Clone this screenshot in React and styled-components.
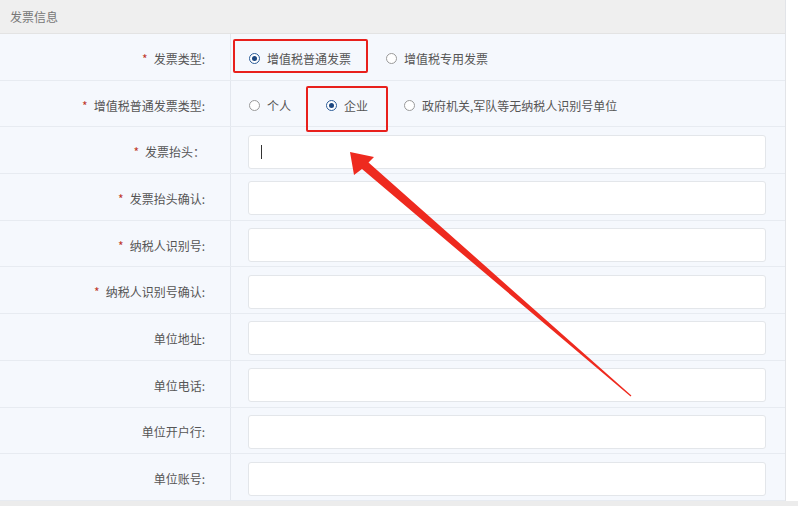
import React from "react"
import styled, { createGlobalStyle } from "styled-components"

const GlobalStyle = createGlobalStyle`
  html, body {
    margin: 0;
    padding: 0;
    background: #ffffff;
  }
  body {
    font-family: "Noto Sans CJK SC", "Noto Sans", sans-serif;
    font-size: 12px;
    color: #555;
  }
`

const Page = styled.div`
  position: relative;
  width: 798px;
  height: 506px;
  overflow: hidden;
  background: #ffffff;
`

const Panel = styled.div`
  width: 786px;
  border-right: 1px solid #e2e4e8;
  box-sizing: border-box;
`

const Header = styled.div`
  height: 34px;
  display: flex;
  align-items: center;
  padding-left: 10px;
  background: #efefef;
  border-bottom: 1px solid #e3e3e3;
  box-sizing: border-box;
  color: #777;
  font-size: 12px;
`

const Row = styled.div`
  display: grid;
  grid-template-columns: 231px 1fr;
  height: 46.7px;
  border-bottom: 1px solid #e7ebf1;
  box-sizing: border-box;
  background: #f5f8fd;
`

const Label = styled.div`
  display: flex;
  align-items: center;
  justify-content: flex-end;
  padding: 3px 25px 0 0;
  border-right: 1px solid #e3e7ee;
  color: #555;
  font-size: 12px;
`

const Star = styled.span`
  color: #c0392b;
  margin-right: 6px;
`

const Value = styled.div`
  display: flex;
  align-items: center;
  padding: 3px 0 0 17px;
`

const Input = styled.div`
  position: relative;
  width: 518px;
  height: 34px;
  background: #ffffff;
  border: 1px solid #e3e6ea;
  border-radius: 3px;
  box-sizing: border-box;
`

const Caret = styled.span`
  position: absolute;
  left: 12px;
  top: 9px;
  width: 1px;
  height: 14px;
  background: #333;
`

const RadioGroup = styled.div`
  display: flex;
  align-items: center;
  padding-left: 1px;
`

const Option = styled.label`
  display: flex;
  align-items: center;
  margin-right: ${(p) => p.gap}px;
  color: #555;
  font-size: 12px;
`

const Dot = styled.span`
  width: 11px;
  height: 11px;
  border-radius: 50%;
  box-sizing: border-box;
  border: 1px solid ${(p) => (p.checked ? "#2b5c98" : "#9a9a9a")};
  background: #fff;
  margin-right: 7px;
  display: flex;
  align-items: center;
  justify-content: center;
  &::after {
    content: "";
    width: 5px;
    height: 5px;
    border-radius: 50%;
    background: ${(p) => (p.checked ? "#1d4780" : "transparent")};
  }
`

const BottomBar = styled.div`
  height: 6px;
  background: #ececec;
`

const Mark = styled.div`
  position: absolute;
  left: ${(p) => p.x}px;
  top: ${(p) => p.y}px;
  width: ${(p) => p.w}px;
  height: ${(p) => p.h}px;
  border: 2px solid #e8201c;
  border-radius: 2px;
  box-sizing: border-box;
  pointer-events: none;
`

const ArrowLayer = styled.svg`
  position: absolute;
  left: 0;
  top: 0;
  pointer-events: none;
`

const Radios = ({ options, gaps }) => (
  <RadioGroup>
    {options.map((o, i) => (
      <Option key={o.text} gap={gaps[i] || 0}>
        <Dot checked={o.checked} />
        {o.text}
      </Option>
    ))}
  </RadioGroup>
)

const fields = [
  { label: "发票抬头：", req: true, caret: true },
  { label: "发票抬头确认:", req: true },
  { label: "纳税人识别号:", req: true },
  { label: "纳税人识别号确认:", req: true },
  { label: "单位地址:" },
  { label: "单位电话:" },
  { label: "单位开户行:" },
  { label: "单位账号:" },
]

const App = () => {
  return (
    <Page>
      <GlobalStyle />
      <Panel>
        <Header>发票信息</Header>
        <Row>
          <Label>
            <Star>*</Star>发票类型:
          </Label>
          <Value>
            <Radios
              gaps={[35]}
              options={[
                { text: "增值税普通发票", checked: true },
                { text: "增值税专用发票" },
              ]}
            />
          </Value>
        </Row>
        <Row>
          <Label>
            <Star>*</Star>增值税普通发票类型:
          </Label>
          <Value>
            <Radios
              gaps={[35, 36]}
              options={[
                { text: "个人" },
                { text: "企业", checked: true },
                { text: "政府机关,军队等无纳税人识别号单位" },
              ]}
            />
          </Value>
        </Row>
        {fields.map((f) => (
          <Row key={f.label}>
            <Label>
              {f.req && <Star>*</Star>}
              {f.label}
            </Label>
            <Value>
              <Input>{f.caret && <Caret />}</Input>
            </Value>
          </Row>
        ))}
      </Panel>
      <BottomBar />

      <Mark x={233} y={39} w={135} h={34} />
      <Mark x={306} y={86} w={82} h={46} />
      <ArrowLayer width="798" height="506" viewBox="0 0 798 506">
        <polygon
          fill="#ee2a1f"
          points="350,152 354,175 362,169 630.6,396.5 631.4,395.5 368.5,162.5 374,157"
        />
      </ArrowLayer>
    </Page>
  )
}

export default App
